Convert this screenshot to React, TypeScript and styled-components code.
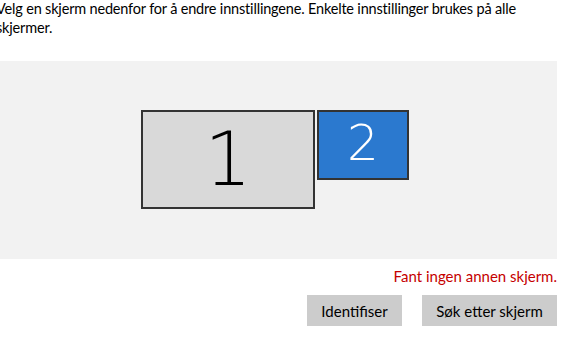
import React from "react";
import styled, { createGlobalStyle } from "styled-components";

const GlobalStyle = createGlobalStyle`
  html, body {
    margin: 0;
    padding: 0;
    background: #ffffff;
    overflow: hidden;
  }
  body {
    font-family: Lato, "Noto Sans", sans-serif;
    color: #000000;
  }
`;

type Monitor = {
  id: number;
  width: number;
  height: number;
  active: boolean;
};

const monitors: Monitor[] = [
  { id: 1, width: 174, height: 99, active: false },
  { id: 2, width: 92, height: 70, active: true },
];

export default function App() {
  return (
    <>
      <GlobalStyle />
      <Page>
        <Description>
          Velg en skjerm nedenfor for å endre innstillingene. Enkelte
          innstillinger brukes på alle skjermer.
        </Description>
        <Arrangement>
          <MonitorRow>
            {monitors.map((m) => (
              <MonitorBox
                key={m.id}
                $active={m.active}
                style={{ width: m.width, height: m.height }}
              >
                <MonitorNumber $active={m.active}>{m.id}</MonitorNumber>
              </MonitorBox>
            ))}
          </MonitorRow>
        </Arrangement>
        <Footer>
          <ErrorText>Fant ingen annen skjerm.</ErrorText>
          <ButtonRow>
            <Button $width={95}>Identifiser</Button>
            <Button $width={135}>Søk etter skjerm</Button>
          </ButtonRow>
        </Footer>
      </Page>
    </>
  );
}

const Page = styled.div`
  display: flex;
  flex-direction: column;
  width: 557px;
`;

const Description = styled.p`
  margin: -1px 0 0 -4px;
  font-size: 14.5px;
  letter-spacing: -0.18px;
  line-height: 19px;
  width: 560px;
  color: #000000;
`;

const Arrangement = styled.div`
  margin-top: 24px;
  height: 198px;
  background: #f2f2f2;
  display: flex;
  justify-content: center;
  box-sizing: border-box;
  padding-top: 49px;
  padding-right: 7px;
`;

const MonitorRow = styled.div`
  display: flex;
  align-items: flex-start;
  gap: 2px;
`;

const MonitorBox = styled.div<{ $active: boolean }>`
  box-sizing: border-box;
  border: 2px solid #333333;
  background: ${({ $active }) => ($active ? "#2b79cf" : "#d9d9d9")};
  display: flex;
  align-items: center;
  justify-content: center;
`;

const MonitorNumber = styled.span<{ $active: boolean }>`
  font-family: "DejaVu Sans", sans-serif;
  font-weight: 200;
  font-size: ${({ $active }) => ($active ? "50px" : "74px")};
  line-height: 1;
  color: ${({ $active }) => ($active ? "#ffffff" : "#000000")};
  margin-top: ${({ $active }) => ($active ? "-4px" : "-1px")};
`;

const Footer = styled.div`
  display: flex;
  flex-direction: column;
  align-items: flex-end;
`;

const ErrorText = styled.div`
  margin-top: 8px;
  font-size: 15px;
  line-height: 19px;
  color: #c50000;
`;

const ButtonRow = styled.div`
  display: flex;
  gap: 20px;
  margin-top: 9px;
`;

const Button = styled.button<{ $width: number }>`
  font-family: Lato, "Noto Sans", sans-serif;
  font-size: 15px;
  height: 31px;
  width: ${({ $width }) => $width}px;
  padding: 0;
  border: none;
  background: #cccccc;
  color: #000000;
`;
